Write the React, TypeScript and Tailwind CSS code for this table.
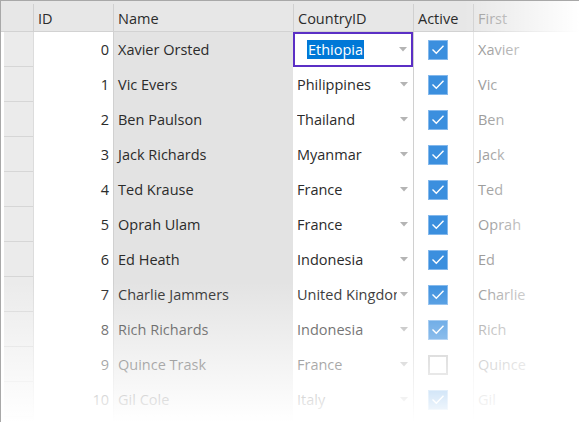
import React from 'react';

type Person = {
  id: number;
  name: string;
  country: string;
  active: boolean;
  first: string;
};

const people: Person[] = [
  { id: 0, name: 'Xavier Orsted', country: 'Ethiopia', active: true, first: 'Xavier' },
  { id: 1, name: 'Vic Evers', country: 'Philippines', active: true, first: 'Vic' },
  { id: 2, name: 'Ben Paulson', country: 'Thailand', active: true, first: 'Ben' },
  { id: 3, name: 'Jack Richards', country: 'Myanmar', active: true, first: 'Jack' },
  { id: 4, name: 'Ted Krause', country: 'France', active: true, first: 'Ted' },
  { id: 5, name: 'Oprah Ulam', country: 'France', active: true, first: 'Oprah' },
  { id: 6, name: 'Ed Heath', country: 'Indonesia', active: true, first: 'Ed' },
  { id: 7, name: 'Charlie Jammers', country: 'United Kingdom', active: true, first: 'Charlie' },
  { id: 8, name: 'Rich Richards', country: 'Indonesia', active: true, first: 'Rich' },
  { id: 9, name: 'Quince Trask', country: 'France', active: false, first: 'Quince' },
  { id: 10, name: 'Gil Cole', country: 'Italy', active: true, first: 'Gil' },
];

const cols = 'grid grid-cols-[32px_80px_180px_120px_60px_1fr]';

const DropArrow = () => (
  <svg width="8" height="5" viewBox="0 0 8 5" className="shrink-0">
    <path d="M0 0h8L4 4.5z" fill="#b4b4b4" />
  </svg>
);

const CheckBox = ({ checked }: { checked: boolean }) =>
  checked ? (
    <div className="w-5 h-5 bg-[#3b8fde] border border-[#83b8ec] flex items-center justify-center">
      <svg width="14" height="11" viewBox="0 0 14 11">
        <path d="M1.5 5.5l3.8 3.8L12.5 1.8" fill="none" stroke="white" strokeWidth="1.4" />
      </svg>
    </div>
  ) : (
    <div className="w-5 h-5 bg-white border-2 border-[#bcbcbc]" />
  );

export default function App() {
  return (
    <div
      className="relative w-[579px] h-[422px] overflow-hidden bg-white border-t border-l border-[#a8a8a8] text-[14.5px] text-[#2b2b2b]"
      style={{ fontFamily: '"Open Sans", "Noto Sans", sans-serif' }}>
      {/* Header */}
      <div className={cols + ' h-[31px] bg-[#e7e7e7] border-b border-[#d2d2d2]'}>
        <div />
        <div className="border-l border-[#d0d0d0] mt-[3px] pl-1 leading-[29px]">ID</div>
        <div className="border-l border-[#d0d0d0] mt-[3px] pl-1 leading-[29px]">Name</div>
        <div className="border-l border-[#d0d0d0] mt-[3px] pl-1 leading-[29px]">CountryID</div>
        <div className="border-l border-[#d0d0d0] mt-[3px] pl-1 leading-[29px]">Active</div>
        <div className="border-l border-[#d0d0d0] mt-[3px] pl-1 leading-[29px] text-[#999]">First</div>
      </div>

      {/* Rows */}
      {people.map((p, i) => (
        <div key={p.id} className={cols + ' h-[35px]'}>
          <div className="bg-[#ebebeb] border-b border-[#d6d6d6] ml-[3px]" />
          <div className="flex items-center justify-end pr-1 bg-white border-l border-[#dcdcdc]">{p.id}</div>
          <div className="flex items-center pl-1 bg-[#e3e3e3] border-l border-[#d0d0d0]">{p.name}</div>
          {i === 0 ? (
            <div className="flex items-center justify-between pl-3 pr-[4px] border-2 border-[#5b2fc5]">
              <span className="bg-[#0078d7] text-white px-px leading-[19px]">{p.country}</span>
              <DropArrow />
            </div>
          ) : (
            <div className="flex items-center justify-between pl-1 pr-[5px] overflow-hidden">
              <span className="whitespace-nowrap overflow-hidden w-[100px]">{p.country}</span>
              <DropArrow />
            </div>
          )}
          <div className="flex items-center pl-[14px] border-l border-[#d0d0d0]">
            <CheckBox checked={p.active} />
          </div>
          <div className="flex items-center pl-1 border-l border-[#e6e6e6] text-[#8a8a8a]">{p.first}</div>
        </div>
      ))}
      <div className={cols + ' h-[10px]'}>
        <div className="bg-[#ebebeb] ml-[3px]" />
        <div className="border-l border-[#dcdcdc]" />
        <div className="bg-[#e3e3e3] border-l border-[#d0d0d0]" />
        <div />
        <div className="border-l border-[#d0d0d0]" />
        <div className="border-l border-[#e6e6e6]" />
      </div>

      {/* Fade overlays */}
      <div className="absolute top-0 right-0 bottom-0 w-[115px] bg-gradient-to-r from-white/0 to-white" />
      <div className="absolute left-0 right-0 bottom-0 h-[140px] bg-gradient-to-b from-white/0 to-white" />
    </div>
  );
}
